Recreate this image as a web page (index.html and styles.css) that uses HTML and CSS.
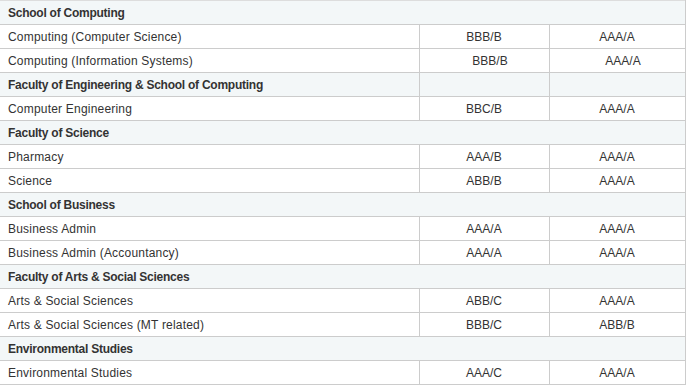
FILE: index.html
```html
<!DOCTYPE html>
<html>
<head>
<meta charset="utf-8">
<link rel="stylesheet" href="styles.css">
</head>
<body>
<table class="grades">
  <colgroup>
    <col class="col-course">
    <col class="col-grade">
    <col class="col-grade2">
  </colgroup>
  <tr class="section"><td colspan="3">School of Computing</td></tr>
  <tr><td class="course">Computing (Computer Science)</td><td class="grade">BBB/B</td><td class="grade">AAA/A</td></tr>
  <tr><td class="course">Computing (Information Systems)</td><td class="grade shift">BBB/B</td><td class="grade shift">AAA/A</td></tr>
  <tr class="section"><td class="course">Faculty of Engineering &amp; School of Computing</td><td class="grade"></td><td class="grade"></td></tr>
  <tr><td class="course">Computer Engineering</td><td class="grade">BBC/B</td><td class="grade">AAA/A</td></tr>
  <tr class="section"><td colspan="3">Faculty of Science</td></tr>
  <tr><td class="course">Pharmacy</td><td class="grade">AAA/B</td><td class="grade">AAA/A</td></tr>
  <tr><td class="course">Science</td><td class="grade">ABB/B</td><td class="grade">AAA/A</td></tr>
  <tr class="section"><td colspan="3">School of Business</td></tr>
  <tr><td class="course">Business Admin</td><td class="grade">AAA/A</td><td class="grade">AAA/A</td></tr>
  <tr><td class="course">Business Admin (Accountancy)</td><td class="grade">AAA/A</td><td class="grade">AAA/A</td></tr>
  <tr class="section"><td colspan="3">Faculty of Arts &amp; Social Sciences</td></tr>
  <tr><td class="course">Arts &amp; Social Sciences</td><td class="grade">ABB/C</td><td class="grade">AAA/A</td></tr>
  <tr><td class="course">Arts &amp; Social Sciences (MT related)</td><td class="grade">BBB/C</td><td class="grade">ABB/B</td></tr>
  <tr class="section"><td colspan="3">Environmental Studies</td></tr>
  <tr><td class="course">Environmental Studies</td><td class="grade">AAA/C</td><td class="grade">AAA/A</td></tr>
</table>
</body>
</html>
```
FILE: styles.css
```css
html, body {
  margin: 0;
  padding: 0;
  background: #ffffff;
}
.grades {
  border-collapse: collapse;
  table-layout: fixed;
  width: 685px;
  font-family: Arial, "Liberation Sans", sans-serif;
  font-size: 12px;
  letter-spacing: 0.2px;
  color: #333333;
  border-top: 1px solid #dddddd;
  border-right: 1px solid #cccccc;
}
.col-course {
  width: 419px;
}
.col-grade {
  width: 130px;
}
.col-grade2 {
  width: 136px;
}
.grades td {
  height: 23px;
  padding: 0 0 0 8px;
  border-bottom: 1px solid #cccccc;
  vertical-align: middle;
  white-space: nowrap;
}
.grades td.grade {
  text-align: center;
  padding: 0;
  border-left: 1px solid #cccccc;
  letter-spacing: 0;
}
.grades td.shift {
  padding-left: 12px;
}
.section td {
  background: #f3f7f8;
  font-weight: bold;
  letter-spacing: -0.25px;
}
```
